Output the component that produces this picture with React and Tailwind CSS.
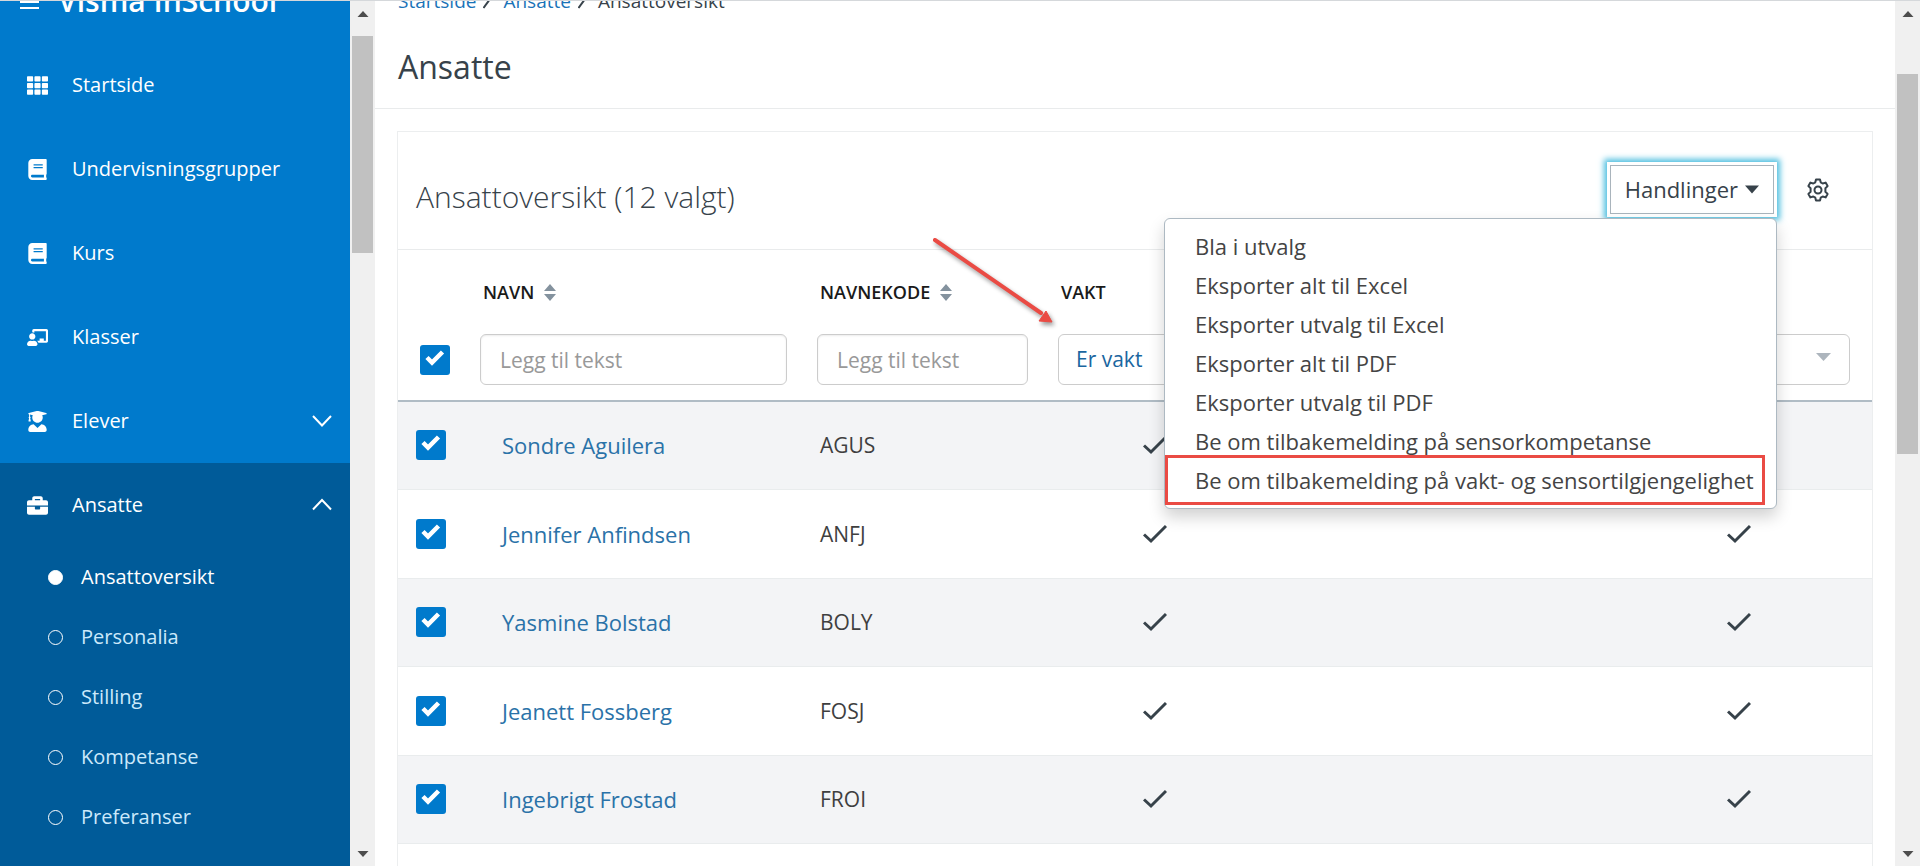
import { FaTh, FaBook, FaChalkboardTeacher, FaUserGraduate, FaBriefcase } from 'react-icons/fa'

const navLinks = [
  { icon: FaTh, label: 'Startside' },
  { icon: FaBook, label: 'Undervisningsgrupper' },
  { icon: FaBook, label: 'Kurs' },
  { icon: FaChalkboardTeacher, label: 'Klasser' },
  { icon: FaUserGraduate, label: 'Elever', chevron: 'down' },
]

const subLinks = ['Ansattoversikt', 'Personalia', 'Stilling', 'Kompetanse', 'Preferanser']

const actions = [
  'Bla i utvalg',
  'Eksporter alt til Excel',
  'Eksporter utvalg til Excel',
  'Eksporter alt til PDF',
  'Eksporter utvalg til PDF',
  'Be om tilbakemelding på sensorkompetanse',
  'Be om tilbakemelding på vakt- og sensortilgjengelighet',
]

const employees = [
  { name: 'Sondre Aguilera', code: 'AGUS' },
  { name: 'Jennifer Anfindsen', code: 'ANFJ' },
  { name: 'Yasmine Bolstad', code: 'BOLY' },
  { name: 'Jeanett Fossberg', code: 'FOSJ' },
  { name: 'Ingebrigt Frostad', code: 'FROI' },
]

function Chevron({ up }) {
  return (
    <svg className="w-5 h-5 mr-[18px]" viewBox="0 0 20 20" fill="none" stroke="currentColor" strokeWidth="2">
      <path d={up ? 'M1 14.5 L10 5 L19 14.5' : 'M1 5 L10 14.5 L19 5'} />
    </svg>
  )
}

function Scrollbar({ thumb }) {
  return (
    <div className="w-[25px] shrink-0 flex flex-col items-center bg-[#f0f0f0]" aria-hidden="true">
      <svg className="w-3 h-[35px] shrink-0" viewBox="0 0 12 35"><path d="M0.5 16 L6 10 L11.5 16 Z" fill="#4d4d4d" /></svg>
      <div className={`w-[21px] bg-[#c1c1c1] ${thumb}`} />
      <svg className="w-3 h-6 shrink-0 mt-auto" viewBox="0 0 12 24"><path d="M0.5 9 L11.5 9 L6 15 Z" fill="#4d4d4d" /></svg>
    </div>
  )
}

function NavItem({ icon: Icon, label, chevron }) {
  return (
    <a href="#" className="h-[84px] shrink-0 flex items-center text-xl font-medium text-white">
      <span className="w-[72px] flex justify-center pl-[3px]"><Icon className="h-[21px] w-auto" /></span>
      <span className="flex-1">{label}</span>
      {chevron && <Chevron up={chevron === 'up'} />}
    </a>
  )
}

function Sidebar() {
  return (
    <aside className="w-[350px] shrink-0 flex flex-col overflow-hidden bg-[#007acc]">
      <div className="h-[42px] shrink-0 flex items-start text-white">
        <div className="w-[58px] h-5 shrink-0 pl-5">
          <svg className="w-[19px] h-[10px]" viewBox="0 0 19 10"><path d="M0 1h19M0 7h19" stroke="currentColor" strokeWidth="2" /></svg>
        </div>
        <p className="-mt-4 text-[30px] leading-8 font-semibold">Visma InSchool</p>
      </div>
      <nav className="flex-1 flex flex-col">
        {navLinks.map(link => <NavItem key={link.label} {...link} />)}
        <div className="flex-1 bg-[#005b99]">
          <NavItem icon={FaBriefcase} label="Ansatte" chevron="up" />
          <ul className="flex flex-col">
            {subLinks.map((label, i) => (
              <li key={label}>
                <a href="#" className={`h-[60px] flex items-center gap-[18px] pl-12 text-xl font-medium ${i === 0 ? 'text-white' : 'text-[#cce9fb]'}`}>
                  <span className={`w-[15px] h-[15px] rounded-full border border-white ${i === 0 ? 'bg-white' : ''}`} />
                  {label}
                </a>
              </li>
            ))}
          </ul>
        </div>
      </nav>
    </aside>
  )
}

function CheckBox({ label }) {
  return (
    <label className="relative block w-[30px] h-[30px]">
      <input type="checkbox" defaultChecked aria-label={label} className="appearance-none block w-[30px] h-[30px] rounded-[3px] bg-[#007acc]" />
      <svg className="absolute inset-0 w-[30px] h-[30px] pointer-events-none" viewBox="0 0 30 30" fill="none" stroke="#fff" strokeWidth="4.5">
        <path d="M7 12.5 L12 17.5 L22.5 7" />
      </svg>
    </label>
  )
}

function SortIcon() {
  return (
    <svg className="w-3 h-[17px]" viewBox="0 0 12 17" fill="#84929e">
      <path d="M0 7 L6 0 L12 7 Z M0 10 L12 10 L6 17 Z" />
    </svg>
  )
}

function Tick() {
  return (
    <svg className="w-6 h-5" viewBox="0 0 24 20" fill="none" stroke="#37424a" strokeWidth="3">
      <path d="M1 10.5 L8 17 L23 2" />
    </svg>
  )
}

function Slash() {
  return (
    <svg className="w-[9px] h-[15px] ml-[7px] mr-[11px]" viewBox="0 0 9 15"><path d="M0.5 14 L8.5 3" stroke="#37424a" strokeWidth="2" /></svg>
  )
}

function ActionMenu() {
  return (
    <div className="relative">
      <button className="h-[49px] flex items-center gap-[7px] px-[14px] bg-white border border-[#a9b4bc] text-[22px] font-medium text-[#37424a] ring-3 ring-white shadow-[0_0_6px_6px_#4fbfe0]">
        Handlinger
        <svg className="w-[14px] h-[9px]" viewBox="0 0 14 9"><path d="M0 0.5 H14 L7 8.5 Z" fill="#37424a" /></svg>
      </button>
      <ul className="absolute right-[-3px] top-[53px] z-10 w-[613px] py-2 bg-white border border-[#adb9c2] rounded-md shadow-[0_8px_16px_rgba(0,0,0,0.18)]">
        {actions.map(action => (
          <li key={action}>
            <button className="w-full h-[39px] px-[30px] text-left text-[22px] whitespace-nowrap text-[#444]">{action}</button>
          </li>
        ))}
        <li className="absolute left-0 bottom-[3px] w-[600px] h-[50px] border-3 border-[#ea4b44] pointer-events-none" aria-hidden="true" />
      </ul>
    </div>
  )
}

const inputStyle = 'w-full h-[51px] px-[19px] border border-[#ccc] rounded-md text-[21px] placeholder:text-[#999] shadow-[inset_0_1px_2px_rgba(0,0,0,0.08)]'
const selectStyle = 'appearance-none w-full h-[51px] px-[17px] border border-[#ccc] rounded-md text-[21px] text-[#1a66a0]'

function EmployeeTable() {
  return (
    <table className="w-full table-fixed border-collapse">
      <colgroup>
        <col className="w-[82px]" />
        <col className="w-[337px]" />
        <col className="w-[241px]" />
        <col className="w-[194px]" />
        <col />
        <col className="w-[266px]" />
      </colgroup>
      <thead>
        <tr className="h-[84px] text-left text-lg text-[#1a1a1a]">
          <th />
          <th className="pl-[3px] font-semibold"><span className="flex items-center gap-[10px]">NAVN <SortIcon /></span></th>
          <th className="pl-[3px] font-semibold"><span className="flex items-center gap-[10px]">NAVNEKODE <SortIcon /></span></th>
          <th className="pl-[3px] font-semibold">VAKT</th>
          <th />
          <th />
        </tr>
        <tr className="h-[67px] align-top border-b-2 border-[#b0bcc5]">
          <td className="pl-[22px] pt-[11px]"><CheckBox label="Velg alle" /></td>
          <td className="pr-[30px]"><input aria-label="Navn" placeholder="Legg til tekst" className={inputStyle} /></td>
          <td className="pr-[30px]"><input aria-label="Navnekode" placeholder="Legg til tekst" className={inputStyle} /></td>
          <td>
            <select aria-label="Vakt" className={selectStyle}><option>Er vakt</option></select>
          </td>
          <td />
          <td className="pr-[22px]">
            <div className="relative">
              <select aria-label="Sensor" className={selectStyle}><option>Er sensor</option></select>
              <svg className="absolute right-[19px] top-[19px] w-[15px] h-2 pointer-events-none" viewBox="0 0 15 8"><path d="M0 0 H15 L7.5 8 Z" fill="#adb5bd" /></svg>
            </div>
          </td>
        </tr>
      </thead>
      <tbody>
        {employees.map(({ name, code }) => (
          <tr key={code} className="odd:h-[88px] even:h-[89px] odd:bg-[#f3f4f6] border-b border-[#e9eced]">
            <td className="pl-[18px]"><CheckBox label={name} /></td>
            <td className="pl-[22px] text-[22px] leading-7"><a href="#" className="text-[#2a72a8]">{name}</a></td>
            <td className="pl-[3px] text-[21px] leading-7 text-[#3f3f3f]">{code}</td>
            <td className="pl-[85px]"><Tick /></td>
            <td />
            <td className="pl-[121px]"><Tick /></td>
          </tr>
        ))}
      </tbody>
    </table>
  )
}

function Gear() {
  return (
    <svg className="w-6 h-6" viewBox="0 0 24 24" fill="none" stroke="#37424a" strokeWidth="2" strokeLinejoin="round">
      <path d="M10 1.5h4l.7 2.800 2 1.200 2.900-.9 2 3.500-2.200 2.100v3.600l2.200 2.100-2 3.500-2.900-.9-2 1.200-.7 2.800h-4l-.7-2.800-2-1.200-2.900.9-2-3.500 2.200-2.100v-3.600L2.400 8.100l2-3.500 2.900.9 2-1.200z" />
      <circle cx="12" cy="12" r="3.5" />
    </svg>
  )
}

export default function App() {
  return (
    <div className="h-screen flex overflow-hidden bg-white border-t border-[#d5d8db] font-['Open_Sans',sans-serif]">
      <Sidebar />
      <Scrollbar thumb="h-[217px]" />
      <main className="flex-1 min-w-0 flex flex-col overflow-hidden">
        <header className="h-[108px] shrink-0 px-[23px] border-b border-[#e9ebec]">
          <nav className="-mt-3 flex items-center text-[19px] leading-6 text-[#37424a]">
            <a href="#" className="text-[#1a73b8]">Startside</a>
            <Slash />
            <a href="#" className="text-[#1a73b8]">Ansatte</a>
            <Slash />
            <span className="font-medium">Ansattoversikt</span>
          </nav>
          <h1 className="mt-[34px] text-[32px] leading-10 text-[#37424a]">Ansatte</h1>
        </header>
        <section className="flex-1 mt-[22px] mx-[22px] border border-b-0 border-[#eceeef]">
          <div className="h-[118px] flex items-start pl-[18px] pr-[42px] border-b border-[#e9ebec]">
            <h2 className="flex-1 mt-[45px] text-[30px] leading-10 font-light text-[#37424a]">Ansattoversikt (12 valgt)</h2>
            <div className="mt-[33px] flex items-center gap-8">
              <ActionMenu />
              <button aria-label="Innstillinger"><Gear /></button>
            </div>
          </div>
          <EmployeeTable />
        </section>
      </main>
      <Scrollbar thumb="mt-[38px] h-[380px]" />
      <svg className="absolute left-[925px] top-[230px] w-[140px] h-[110px] pointer-events-none drop-shadow-[2px_3px_2px_rgba(0,0,0,0.4)]" viewBox="0 0 140 110">
        <path d="M10 10 L116 83" stroke="#ea4b44" strokeWidth="4" strokeLinecap="round" />
        <path d="M127 92 L114 91 L121 81 Z" fill="#ea4b44" stroke="#ea4b44" strokeWidth="1" />
      </svg>
    </div>
  )
}
